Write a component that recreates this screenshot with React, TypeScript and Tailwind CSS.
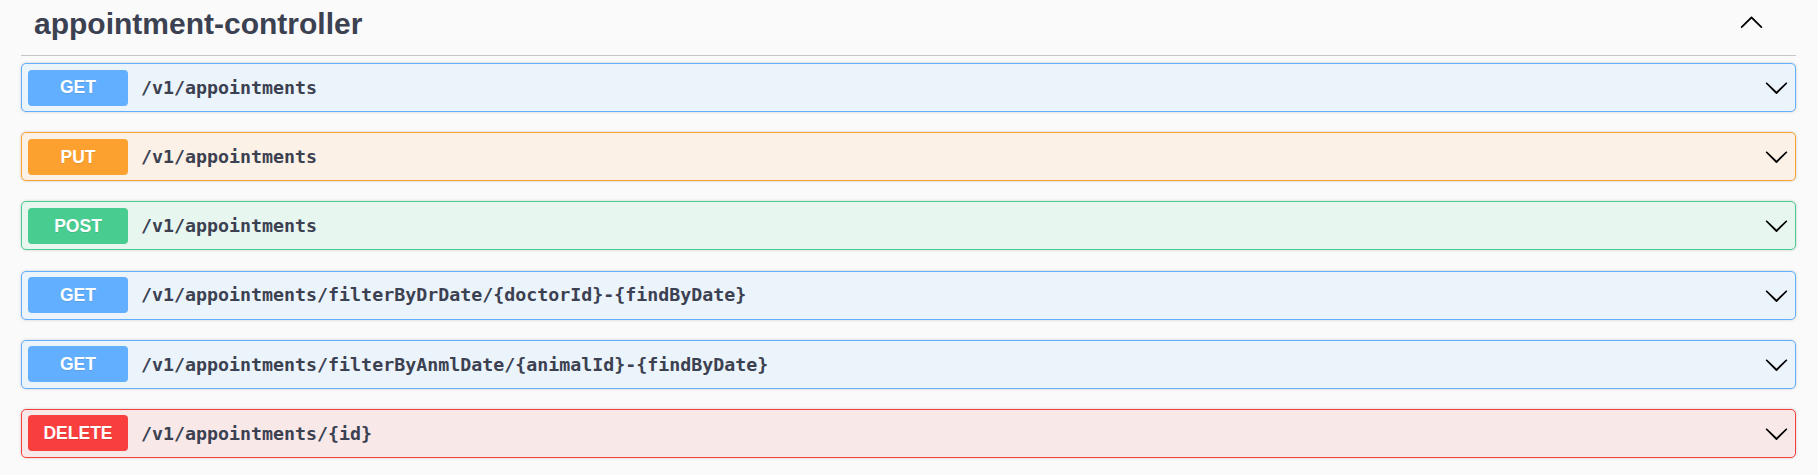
import React from "react"

type Op = {
  method: string
  path: string
  badge: string
  border: string
  bg: string
}

const ops: Op[] = [
  { method: "GET", path: "/v1/appointments", badge: "bg-[#61affe]", border: "border-[#61affe]", bg: "bg-[#ebf3fb]" },
  { method: "PUT", path: "/v1/appointments", badge: "bg-[#fca130]", border: "border-[#fca130]", bg: "bg-[#fbf1e6]" },
  { method: "POST", path: "/v1/appointments", badge: "bg-[#49cc90]", border: "border-[#49cc90]", bg: "bg-[#e8f6f0]" },
  {
    method: "GET",
    path: "/v1/appointments/filterByDrDate/{doctorId}-{findByDate}",
    badge: "bg-[#61affe]",
    border: "border-[#61affe]",
    bg: "bg-[#ebf3fb]",
  },
  {
    method: "GET",
    path: "/v1/appointments/filterByAnmlDate/{animalId}-{findByDate}",
    badge: "bg-[#61affe]",
    border: "border-[#61affe]",
    bg: "bg-[#ebf3fb]",
  },
  { method: "DELETE", path: "/v1/appointments/{id}", badge: "bg-[#f93e3e]", border: "border-[#f93e3e]", bg: "bg-[#f9e8e8]" },
]

function ArrowDown() {
  return (
    <svg width="25" height="25" viewBox="0 0 20 20" className="shrink-0">
      <path
        fill="#000"
        d="M17.418 6.109c.272-.268.709-.268.979 0s.271.701 0 .969l-7.908 7.83c-.27.268-.707.268-.979 0l-7.908-7.83c-.27-.268-.27-.701 0-.969.271-.268.709-.268.979 0L10 13.25l7.418-7.141z"
      />
    </svg>
  )
}

function ArrowUp() {
  return (
    <svg width="25" height="25" viewBox="0 0 20 20" className="shrink-0">
      <path
        fill="#000"
        d="M17.418 14.908c.272.268.709.268.979 0s.271-.701 0-.969l-7.908-7.83c-.27-.268-.707-.268-.979 0l-7.908 7.83c-.27.268-.27.701 0 .969.271.268.709.268.979 0L10 7.771l7.418 7.137z"
      />
    </svg>
  )
}

export default function App() {
  return (
    <div className="min-h-[475px] bg-[#fafafa] pl-[21px] pr-[22px]">
      <div className="flex h-[56px] items-start justify-between border-b border-[#c4c6ca] pl-[13px] pr-[32px] pt-[9px]">
        <h3 className="font-['Liberation_Sans',Arial,sans-serif] text-[30px] font-bold leading-[30px] text-[#3b4151]">
          appointment-controller
        </h3>
        <ArrowUp />
      </div>
      <div className="mt-[7px] flex flex-col gap-[20.2px]">
        {ops.map((op, i) => (
          <div
            key={i}
            className={`flex h-[49px] items-center rounded-[5px] border pl-[6px] pr-[6px] shadow-[0_0_3px_rgba(0,0,0,0.19)] ${op.border} ${op.bg}`}
          >
            <span
              className={`flex h-[36px] w-[100px] shrink-0 items-center justify-center rounded-[4px] font-['Liberation_Sans',Arial,sans-serif] text-[17.5px] font-bold text-white [text-shadow:0_1px_0_rgba(0,0,0,0.1)] ${op.badge}`}
            >
              {op.method}
            </span>
            <span className="flex-1 pl-[13px] font-['DejaVu_Sans_Mono',monospace] text-[18.3px] font-bold text-[#3b4151]">
              {op.path}
            </span>
            <ArrowDown />
          </div>
        ))}
      </div>
    </div>
  )
}
